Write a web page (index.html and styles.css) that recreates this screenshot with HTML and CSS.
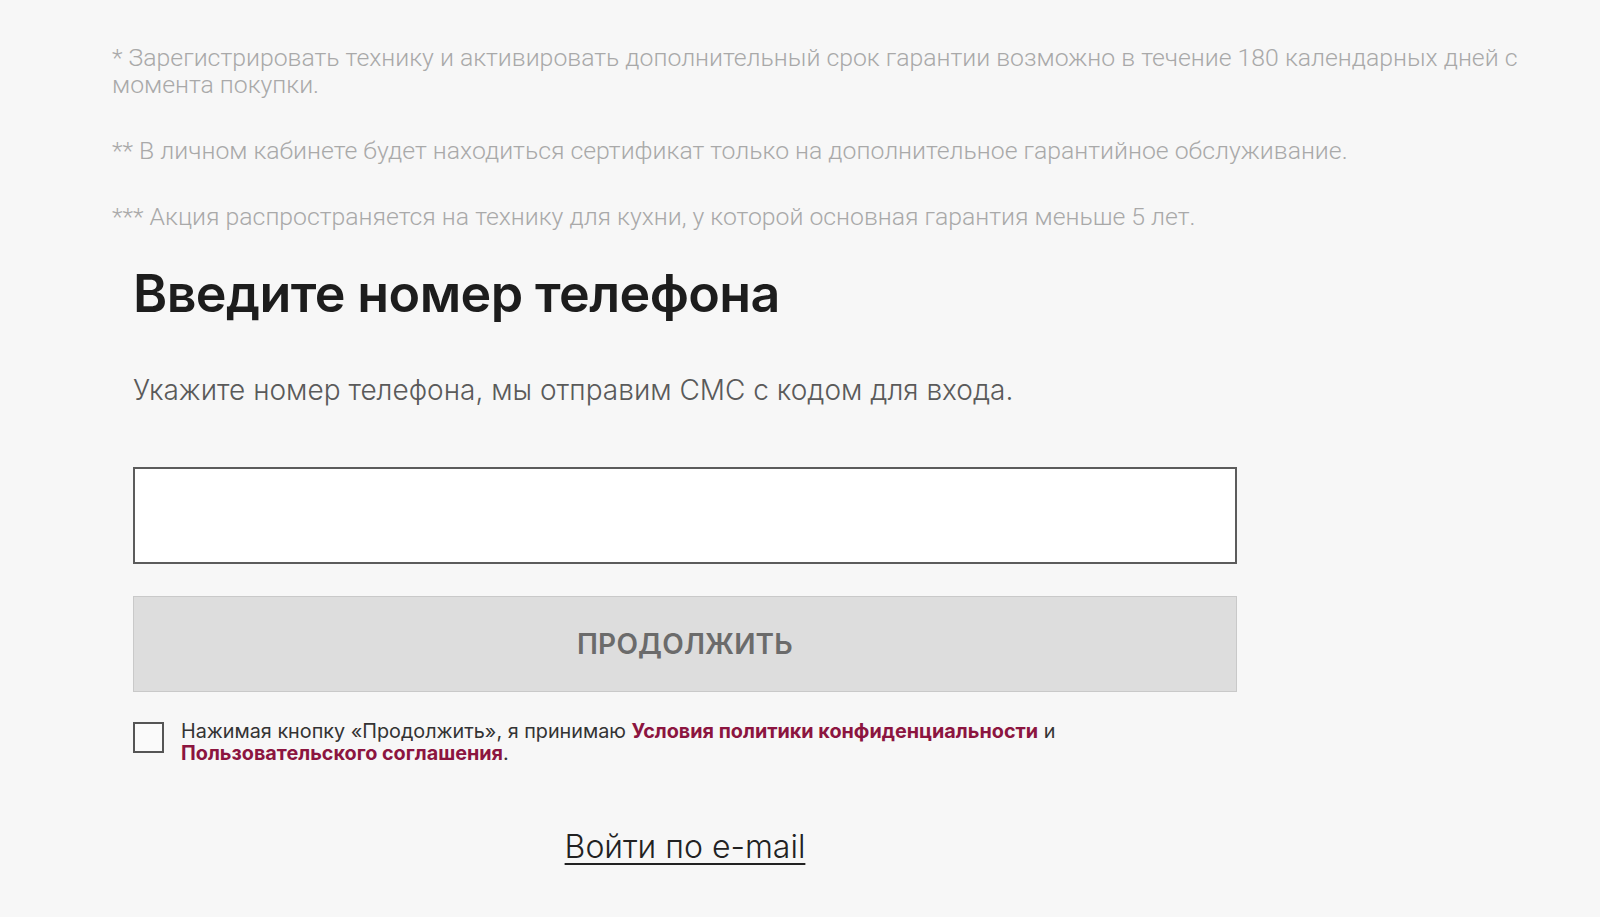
FILE: index.html
```html
<!DOCTYPE html>
<html lang="ru">
<head>
<meta charset="utf-8">
<title>Вход по номеру телефона</title>
<link rel="stylesheet" href="styles.css">
</head>
<body>
<main class="page">
  <section class="notes">
    <p class="note">* Зарегистрировать технику и активировать дополнительный срок гарантии возможно в течение 180 календарных дней с момента покупки.</p>
    <p class="note">** В личном кабинете будет находиться сертификат только на дополнительное гарантийное обслуживание.</p>
    <p class="note">*** Акция распространяется на технику для кухни, у которой основная гарантия меньше 5 лет.</p>
  </section>

  <form class="login">
    <h1 class="login-title">Введите номер телефона</h1>
    <p class="login-lead">Укажите номер телефона, мы отправим СМС с кодом для входа.</p>
    <input class="phone-input" type="tel" aria-label="Номер телефона">
    <button class="submit" type="button">Продолжить</button>
    <label class="consent">
      <span class="consent-box"></span>
      <span class="consent-text">Нажимая кнопку «Продолжить», я принимаю <a class="consent-link" href="#">Условия политики конфиденциальности</a> и <a class="consent-link" href="#">Пользовательского соглашения</a>.</span>
    </label>
    <div class="alt-login">
      <a class="alt-link" href="#">Войти по e-mail</a>
    </div>
  </form>
</main>
</body>
</html>
```
FILE: styles.css
```css
html, body {
  margin: 0;
  padding: 0;
  background: #f7f7f7;
}

body {
  font-family: "Inter", "Open Sans", sans-serif;
  color: #1c1c1c;
}

.page {
  padding: 44px 0 0 112px;
}

.notes {
  padding-right: 60px;
}

.note {
  margin: 0 0 39px;
  font-family: "Roboto", "Inter", sans-serif;
  font-weight: 300;
  font-size: 24.8px;
  line-height: 27px;
  color: #a9a9a9;
}

.note:last-child {
  margin-bottom: 0;
}

.login {
  width: 1104px;
  margin: 32px 0 0 21px;
  display: flex;
  flex-direction: column;
}

.login-title {
  margin: 0;
  font-family: "Inter", sans-serif;
  font-weight: 600;
  font-size: 52px;
  line-height: 64px;
  letter-spacing: -0.6px;
  color: #1d1d1d;
}

.login-lead {
  margin: 47px 0 0;
  font-family: "Inter", sans-serif;
  font-weight: 300;
  font-size: 28px;
  line-height: 34px;
  color: #5a5a5a;
}

.phone-input {
  margin-top: 60px;
  box-sizing: border-box;
  width: 100%;
  height: 97px;
  border: 2px solid #5c5c5c;
  background: #fff;
  outline: none;
  font-size: 26px;
  padding: 0 24px;
}

.submit {
  margin-top: 32px;
  box-sizing: border-box;
  width: 100%;
  height: 96px;
  border: 1px solid #c9c9c9;
  background: #dddddd;
  color: #6b6b6b;
  font-family: "Inter", sans-serif;
  font-weight: 600;
  font-size: 28px;
  text-transform: uppercase;
  letter-spacing: 0.2px;
  cursor: pointer;
}

.consent {
  margin-top: 28px;
  display: flex;
  align-items: flex-start;
  gap: 17px;
}

.consent-box {
  flex: none;
  box-sizing: border-box;
  width: 31px;
  height: 31px;
  margin-top: 2px;
  border: 2px solid #555;
  background: #fafafa;
}

.consent-text {
  max-width: 900px;
  font-family: "Inter", sans-serif;
  font-size: 19.8px;
  line-height: 22px;
  color: #333;
}

.consent-link {
  color: #8c1540;
  font-weight: 700;
  text-decoration: none;
}

.alt-login {
  margin-top: 63px;
  display: flex;
  justify-content: center;
}

.alt-link {
  font-family: "Inter", sans-serif;
  font-weight: 300;
  font-size: 32px;
  line-height: 40px;
  color: #222;
  text-decoration: underline;
  text-decoration-thickness: 2px;
  text-underline-offset: 5px;
}
```
